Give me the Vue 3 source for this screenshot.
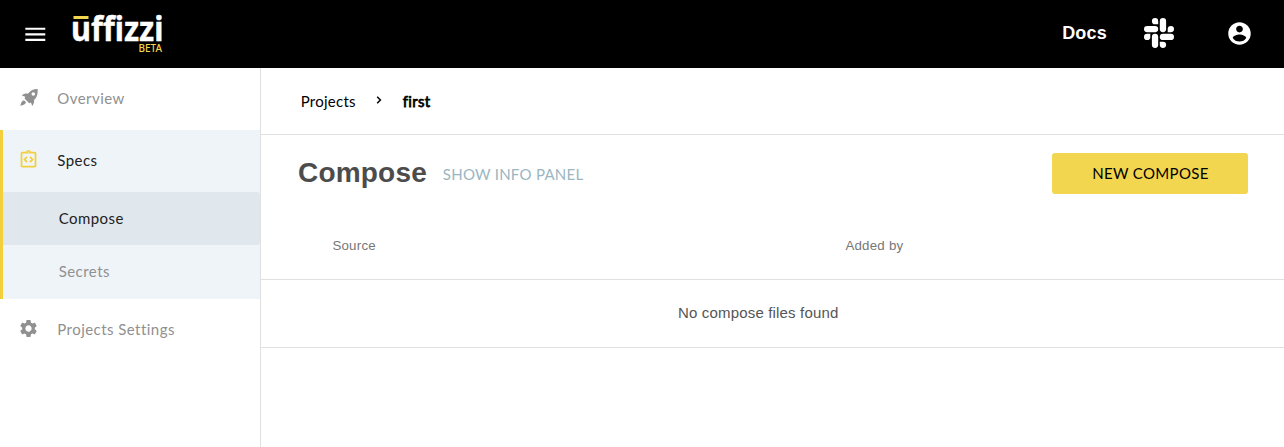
<script setup>
const menuPath = 'M3 18h18v-2H3v2zm0-5h18v-2H3v2zm0-7v2h18V6H3z'
const slackPath = 'M5.042 15.165a2.528 2.528 0 0 1-2.52 2.523A2.528 2.528 0 0 1 0 15.165a2.527 2.527 0 0 1 2.522-2.52h2.52v2.52zM6.313 15.165a2.527 2.527 0 0 1 2.521-2.52 2.527 2.527 0 0 1 2.521 2.52v6.313A2.528 2.528 0 0 1 8.834 24a2.528 2.528 0 0 1-2.521-2.522v-6.313zM8.834 5.042a2.528 2.528 0 0 1-2.521-2.52A2.528 2.528 0 0 1 8.834 0a2.528 2.528 0 0 1 2.521 2.522v2.52H8.834zM8.834 6.313a2.528 2.528 0 0 1 2.521 2.521 2.528 2.528 0 0 1-2.521 2.521H2.522A2.528 2.528 0 0 1 0 8.834a2.528 2.528 0 0 1 2.522-2.521h6.312zM18.956 8.834a2.528 2.528 0 0 1 2.522-2.521A2.528 2.528 0 0 1 24 8.834a2.528 2.528 0 0 1-2.522 2.521h-2.522V8.834zM17.688 8.834a2.528 2.528 0 0 1-2.523 2.521 2.527 2.527 0 0 1-2.52-2.521V2.522A2.527 2.527 0 0 1 15.165 0a2.528 2.528 0 0 1 2.523 2.522v6.312zM15.165 18.956a2.528 2.528 0 0 1 2.523 2.522A2.528 2.528 0 0 1 15.165 24a2.527 2.527 0 0 1-2.52-2.522v-2.522h2.52zM15.165 17.688a2.527 2.527 0 0 1-2.52-2.523 2.526 2.526 0 0 1 2.52-2.52h6.313A2.527 2.527 0 0 1 24 15.165a2.528 2.528 0 0 1-2.522 2.523h-6.313z'
const accountPath = 'M12 2C6.48 2 2 6.48 2 12s4.48 10 10 10 10-4.480 10-10S17.520 2 12 2zm0 3c1.660 0 3 1.340 3 3s-1.340 3-3 3-3-1.340-3-3 1.340-3 3-3zm0 14.200c-2.500 0-4.710-1.280-6-3.220.03-1.990 4-3.080 6-3.080 1.990 0 5.970 1.090 6 3.080-1.290 1.940-3.500 3.220-6 3.220z'
const gearPath = 'M19.14 12.94c.04-.3.06-.61.06-.94 0-.32-.02-.64-.07-.94l2.03-1.58c.18-.14.23-.41.12-.61l-1.92-3.32c-.12-.22-.37-.29-.59-.22l-2.39.96c-.5-.38-1.03-.7-1.62-.94l-.36-2.54c-.04-.24-.24-.41-.48-.41h-3.84c-.24 0-.43.17-.47.41l-.36 2.54c-.59.24-1.13.57-1.62.94l-2.39-.96c-.22-.08-.47 0-.59.22L2.74 8.87c-.12.21-.08.47.12.61l2.03 1.58c-.05.3-.09.63-.09.94s.02.64.07.94l-2.03 1.58c-.18.14-.23.41-.12.61l1.92 3.32c.12.22.37.29.59.22l2.39-.96c.5.38 1.03.7 1.62.94l.36 2.54c.05.24.24.41.48.41h3.84c.24 0 .44-.17.47-.41l.36-2.54c.59-.24 1.13-.56 1.62-.94l2.39.96c.22.08.47 0 .59-.22l1.92-3.32c.12-.22.07-.47-.12-.61l-2.01-1.58zM12 15.6c-1.98 0-3.6-1.62-3.6-3.6s1.62-3.6 3.6-3.6 3.6 1.62 3.6 3.6-1.62 3.6-3.6 3.6z'
const specsPath = 'M11 14.17 8.83 12 11 9.83 9.59 8.41 6 12l3.59 3.59zM14.41 15.59 18 12l-3.59-3.59L13 9.83 15.17 12 13 14.17zM19 3h-4.18C14.4 1.84 13.3 1 12 1s-2.4.84-2.82 2H5c-1.1 0-2 .9-2 2v14c0 1.1.9 2 2 2h14c1.1 0 2-.9 2-2V5c0-1.1-.9-2-2-2zm-7-.25c.41 0 .75.34.75.75s-.34.75-.75.75-.75-.34-.75-.75.34-.75.75-.75zM19 19H5V5h14v14z'
const rocketPath = 'M20.2 2.2C15.4 2 11.8 4 9.1 7.6 6.3 7.3 4.2 8 2 9.7l4 1.5c-.3.7-.6 1.400-.8 2l5.300 5.300c.7-.2 1.400-.5 2-.8L14 21.700c1.700-2.200 2.400-4.300 2.100-7.100 3.600-2.700 4.300-7.600 4.100-12.400zM15.200 10.100a2 2 0 1 1 0-4.100 2 2 0 0 1 0 4.100zM4.500 15.100C2.100 15.700 1 18 .4 21.500c3.500-.6 6-1.800 6.500-4.100z'
</script>

<template>
  <div class="page">
    <header class="topbar">
      <svg class="menu" viewBox="0 0 24 24"><path :d="menuPath" /></svg>
      <svg class="logo" viewBox="0 0 96 46">
        <text class="word" x="1" y="33" textLength="92.500" lengthAdjust="spacingAndGlyphs">uffizzi</text>
        <rect x="3.500" y="8" width="15" height="3" class="bar" />
        <text class="beta" x="68.500" y="44.300" textLength="23.500" lengthAdjust="spacingAndGlyphs">BETA</text>
      </svg>
      <a class="docs">Docs</a>
      <svg class="slack" viewBox="0 0 24 24"><path :d="slackPath" /></svg>
      <svg class="account" viewBox="0 0 24 24"><path :d="accountPath" /></svg>
    </header>
    <div class="body">
      <nav class="sidebar">
        <a class="item"><svg class="rocket" viewBox="0 0 24 24"><path :d="rocketPath" /></svg><span>Overview</span></a>
        <div class="group">
          <a class="item specs"><svg viewBox="0 0 24 24"><path :d="specsPath" /></svg><span>Specs</span></a>
          <a class="sub active">Compose</a>
          <a class="sub last">Secrets</a>
        </div>
        <a class="item settings"><svg viewBox="0 0 24 24"><path :d="gearPath" /></svg><span>Projects Settings</span></a>
      </nav>
      <main class="content">
        <div class="crumbs">
          <span class="parent">Projects</span>
          <svg class="chevron" viewBox="0 0 6 8"><path d="M1.200 .8 4.400 4 1.200 7.200" /></svg>
          <span class="current">first</span>
        </div>
        <div class="heading">
          <h1>Compose</h1>
          <a class="info">SHOW INFO PANEL</a>
          <button class="new">NEW COMPOSE</button>
        </div>
        <div class="columns"><span>Source</span><span>Added by</span></div>
        <div class="empty">No compose files found</div>
      </main>
    </div>
  </div>
</template>

<style>
body { margin: 0; background: #fff; }
</style>

<style scoped>
.page { height: 447px; display: flex; flex-direction: column; overflow: hidden; font-family: Lato, "Liberation Sans", sans-serif; font-size: 15px; }
.topbar { height: 68px; flex: none; display: flex; align-items: center; background: #000; box-sizing: border-box; padding: 0 31px 0 21.700px; }
.topbar svg { fill: #fff; flex: none; }
.menu { width: 26.600px; height: 26.600px; }
.logo { width: 96px; height: 46px; margin-left: 21.700px; margin-top: -6px; overflow: visible; }
.word { font: 700 34px "Noto Sans", sans-serif; fill: #fff; stroke: #fff; stroke-width: .4; }
.topbar .bar, .topbar .beta { fill: #f3d64e; }
.beta { font: 500 10px "Noto Sans", sans-serif; }
.docs { margin-left: auto; color: #fff; font: 700 18px/22px "Liberation Sans", sans-serif; letter-spacing: .2px; margin-top: -2px; }
.slack { width: 30px; height: 30px; margin-left: 37px; margin-top: -2px; }
.account { width: 27px; height: 27px; margin-left: 52px; margin-top: -1px; }
.body { display: flex; flex: 1; }
.sidebar { width: 260px; flex: none; border-right: 1px solid #e0e0e0; letter-spacing: .45px; color: #909090; }
.item { display: flex; align-items: center; height: 62px; box-sizing: border-box; padding: 0 0 2px 18px; }
.item svg { width: 21px; height: 21px; margin-right: 18.300px; margin-top: -2px; fill: currentColor; }
.item .rocket { margin-left: 1.600px; margin-right: 16.700px; }
.group { background: #eff4f8; border-left: 3px solid #f2cf3b; }
.item.specs { padding-left: 15px; color: #222; }
.specs svg { fill: #f2cf3b; }
.sub { display: flex; align-items: center; height: 53px; box-sizing: border-box; padding: 0 0 2px 55.700px; }
.active { background: #e0e8ee; color: #222; border-radius: 0 3px 3px 0; }
.last { height: 54px; }
.content { flex: 1; }
.crumbs { height: 66px; display: flex; align-items: center; padding-left: 39.700px; border-bottom: 1px solid #e0e0e0; color: #000; }
.parent { letter-spacing: .25px; }
.chevron { width: 6px; height: 8px; margin: -3px 20.400px 0 20.600px; fill: none; stroke: #000; stroke-width: 1.500; }
.current { letter-spacing: .3px; -webkit-text-stroke: .75px #000; }
.heading { height: 76px; display: flex; align-items: center; padding: 0 36px 0 37px; }
h1 { margin: 0; font: 700 28px/34px "Liberation Sans", sans-serif; color: #4c4c4c; letter-spacing: .2px; }
.info { color: #9ab6c2; letter-spacing: .26px; margin-left: 15.800px; margin-top: 1px; }
.new { margin-left: auto; width: 196px; height: 41px; margin-top: 1px; border: 0; border-radius: 3px; background: #f2d64f; color: #000; font: 15px Lato, sans-serif; letter-spacing: .35px; padding: 0 0 2px 1px; }
.columns { height: 68px; display: grid; grid-template-columns: 513px 1fr; align-items: center; padding-left: 71.400px; border-bottom: 1px solid #e0e0e0; font: 13.300px "Liberation Sans", sans-serif; letter-spacing: .23px; color: #777; }
.empty { height: 68px; box-sizing: border-box; display: flex; align-items: center; justify-content: center; border-bottom: 1px solid #e0e0e0; font: 15px "Liberation Sans", sans-serif; letter-spacing: .17px; color: #555; padding: 0 28.500px 2px 0; }
</style>
